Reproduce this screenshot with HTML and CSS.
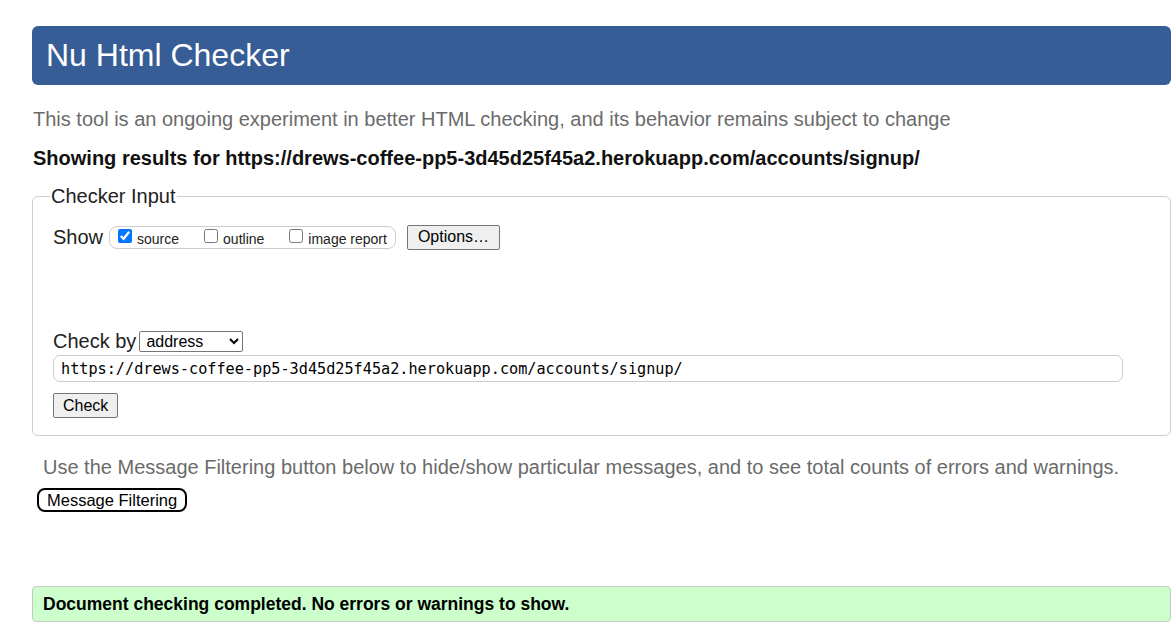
FILE: index.html
```html
<!DOCTYPE html>
<html lang="en">
<head>
<meta charset="utf-8">
<title>Nu Html Checker</title>
<link rel="stylesheet" href="styles.css">
</head>
<body>
<h1 class="title">Nu Html Checker</h1>
<p class="intro">This tool is an ongoing experiment in better HTML checking, and its behavior remains subject to change</p>
<p class="showing">Showing results for https://drews-coffee-pp5-3d45d25f45a2.herokuapp.com/accounts/signup/</p>
<fieldset class="checker">
  <legend class="legend">Checker Input</legend>
  <div class="show-row">
    <span class="label">Show</span>
    <span class="checks">
      <label class="check"><input type="checkbox" checked><span>source</span></label>
      <label class="check"><input type="checkbox"><span>outline</span></label>
      <label class="check last"><input type="checkbox"><span>image report</span></label>
    </span>
    <button class="btn options">Options…</button>
  </div>
  <div class="by-row">
    <span class="label">Check by</span>
    <select class="select"><option>address</option></select>
  </div>
  <input class="url" type="text" value="https://drews-coffee-pp5-3d45d25f45a2.herokuapp.com/accounts/signup/">
  <div class="submit-row"><button class="btn check-btn">Check</button></div>
</fieldset>
<p class="filter-note">Use the Message Filtering button below to hide/show particular messages, and to see total counts of errors and warnings.</p>
<button class="filter-btn">Message Filtering</button>
<div class="success">Document checking completed. No errors or warnings to show.</div>
</body>
</html>
```
FILE: styles.css
```css
html, body {
  margin: 0;
  background: #fff;
}
body {
  padding: 26px 0 0 32px;
  font-family: "Liberation Sans", Arial, sans-serif;
  color: #000;
  overflow: hidden;
}
.title {
  margin: 0;
  background: #365d95;
  color: #fff;
  font-size: 32px;
  font-weight: normal;
  line-height: 37px;
  padding: 11px 14px;
  border-radius: 6px;
}
.intro {
  margin: 23px 0 0 1px;
  color: #6b6b6b;
  font-size: 20px;
  line-height: 23px;
}
.showing {
  margin: 16px 0 0 1px;
  font-size: 20px;
  font-weight: bold;
  line-height: 23px;
  color: #111;
}
.checker {
  margin: 15px 0 0 0;
  border: 1px solid #ccc;
  border-radius: 6px;
  padding: 0 20px 17px 20px;
}
.legend {
  font-size: 20px;
  line-height: 23px;
  padding: 0 1px;
  margin-left: -3px;
  color: #222;
}
.show-row {
  display: flex;
  align-items: center;
  margin-top: 16px;
  height: 26px;
}
.label {
  font-size: 20px;
  line-height: 23px;
  color: #222;
}
.checks {
  display: inline-flex;
  align-items: center;
  margin-left: 6px;
  border: 1px solid #ccc;
  border-radius: 8px;
  height: 21px;
  padding: 0 8px 0 4px;
}
.check {
  display: inline-flex;
  align-items: center;
  font-size: 14px;
  margin-right: 21px;
  color: #222;
}
.check.last {
  margin-right: 0;
}
.check input {
  margin: 0 5px 2px 4px;
  width: 14px;
  height: 14px;
}
.check span {
  position: relative;
  top: 2px;
}
.btn {
  font-family: "Liberation Sans", Arial, sans-serif;
  font-size: 16px;
  background: #efefef;
  border: 1px solid #767676;
  border-radius: 2px;
  color: #000;
  height: 25px;
  padding: 0 9px;
}
.options {
  margin-left: 11px;
  padding: 0 10px;
}
.by-row {
  display: flex;
  align-items: center;
  margin-top: 80px;
  height: 23px;
}
.select {
  margin-left: 3px;
  font-family: "Liberation Sans", Arial, sans-serif;
  font-size: 16px;
  width: 104px;
  height: 21px;
  border: 1px solid #767676;
  border-radius: 2px;
  background: #fff;
  color: #000;
  padding: 0 2px;
}
.url {
  display: block;
  box-sizing: border-box;
  margin-top: 2px;
  width: 1070px;
  height: 27px;
  border: 1px solid #ccc;
  border-radius: 7px;
  padding: 0 7px;
  font-family: "DejaVu Sans Mono", "Liberation Mono", monospace;
  font-size: 15.2px;
  color: #000;
  outline: none;
}
.submit-row {
  margin-top: 11px;
}
.check-btn {
  width: 65px;
}
.filter-note {
  margin: 20px 0 0 11px;
  color: #6b6b6b;
  font-size: 20px;
  line-height: 23px;
}
.filter-btn {
  display: block;
  margin: 9px 0 0 5px;
  font-family: "Liberation Sans", Arial, sans-serif;
  font-size: 16.5px;
  background: #fff;
  border: 2px solid #000;
  border-radius: 8px;
  height: 24px;
  padding: 0 8px;
  color: #000;
}
.success {
  margin-top: 74px;
  background: #ccffcc;
  border: 1px solid #c8c8c8;
  border-radius: 4px;
  padding: 0 10px;
  height: 34px;
  line-height: 34px;
  font-size: 17.5px;
  font-weight: bold;
  color: #000;
}
```
